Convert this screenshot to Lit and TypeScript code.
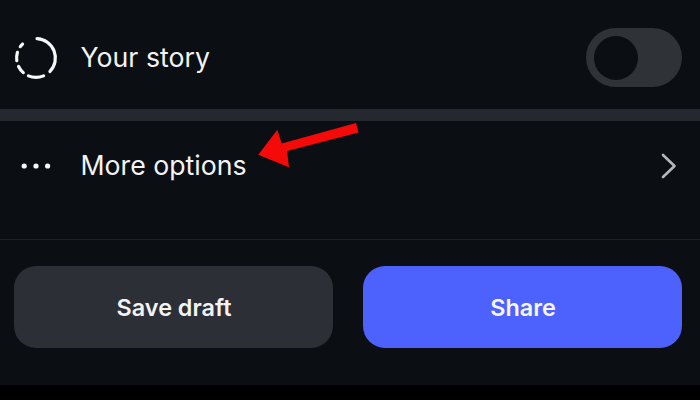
import { LitElement, html, css, svg } from "lit";
import { customElement } from "lit/decorators.js";

const C = 20, R = 19.4;
const pt = (a: number) => {
  const t = (a * Math.PI) / 180;
  return `${(C + R * Math.sin(t)).toFixed(2)} ${(C - R * Math.cos(t)).toFixed(2)}`;
};
const arc = (a: number, b: number) =>
  svg`<path d="M${pt(a)} A${R} ${R} 0 ${b - a > 180 ? 1 : 0} 1 ${pt(b)}"/>`;

@customElement("app-root")
export class AppRoot extends LitElement {
  static styles = css`
    :host {
      display: block;
      position: relative;
      width: 700px;
      height: 400px;
      overflow: hidden;
      background: #000;
      font-family: Inter, "Liberation Sans", sans-serif;
      color: #f2f3f5;
    }
    .sheet {
      height: 385px;
      background: #0b0e13;
      display: flex;
      flex-direction: column;
    }
    .row {
      display: flex;
      align-items: center;
      padding: 0 18px 0 16px;
      font-size: 26.7px;
      line-height: 32px;
    }
    .story { height: 109px; padding-top: 6px; box-sizing: border-box; }
    .band { height: 12px; background: #25282e; }
    .more { height: 119px; padding-bottom: 29px; box-sizing: border-box; border-bottom: 1px solid #1e2126; }
    .icon { width: 40px; height: 40px; flex: none; margin-right: 25px; overflow: visible; }
    .label { flex: 1; padding-bottom: 1px; margin-left: -0.5px; }
    .toggle {
      width: 96px;
      height: 59px;
      border-radius: 30px;
      background: #2f3237;
      display: flex;
      align-items: center;
      padding-left: 8px;
      box-sizing: border-box;
    }
    .knob { width: 44px; height: 44px; border-radius: 50%; background: #0b0e13; }
    .chev { width: 16px; height: 26px; flex: none; margin-right: 5px; }
    .actions {
      display: grid;
      grid-template-columns: 319px 319px;
      gap: 30px;
      padding: 26px 18px 0 14px;
    }
    .btn {
      height: 82px;
      border-radius: 22px;
      display: flex;
      align-items: center;
      justify-content: center;
      padding-left: 1px;
      box-sizing: border-box;
      font-size: 23.4px;
      font-weight: 600;
      color: #f2f3f5;
    }
    .draft { background: #2c2f36; }
    .share { background: #4d61fc; color: #f5f6ff; }
    .arrow { position: absolute; left: 250px; top: 118px; width: 115px; height: 58px; }
  `;

  render() {
    return html`
      <div class="sheet">
        <div class="row story">
          <svg class="icon" viewBox="0 0 40 40" fill="none" stroke="#f7f8f9" stroke-width="3.2" stroke-linecap="round">
            ${arc(3, 134)}${arc(157, 203)}${arc(221, 244)}${arc(262, 287)}${arc(306, 316)}
          </svg>
          <div class="label">Your story</div>
          <div class="toggle"><div class="knob"></div></div>
        </div>
        <div class="band"></div>
        <div class="row more">
          <svg class="icon" viewBox="0 0 40 40" fill="#f7f8f9">
            <circle cx="8.2" cy="20" r="2.6"/><circle cx="20" cy="20" r="2.6"/><circle cx="31.6" cy="20" r="2.6"/>
          </svg>
          <div class="label">More options</div>
          <svg class="chev" viewBox="0 0 16 26" fill="none" stroke="#b4b7bc" stroke-width="2.6" stroke-linecap="round" stroke-linejoin="round">
            <path d="M2 2 L13.5 13 L2 24"/>
          </svg>
        </div>
        <div class="actions">
          <div class="btn draft">Save draft</div>
          <div class="btn share">Share</div>
        </div>
      </div>
      <svg class="arrow" viewBox="0 0 115 58">
        <path fill="#f50a0a" d="M106 5 L108.5 14.5 L37 33 L39 49.3 L8.3 36.7 L27.3 11.7 L31.7 25.5 Z"/>
      </svg>
    `;
  }
}
